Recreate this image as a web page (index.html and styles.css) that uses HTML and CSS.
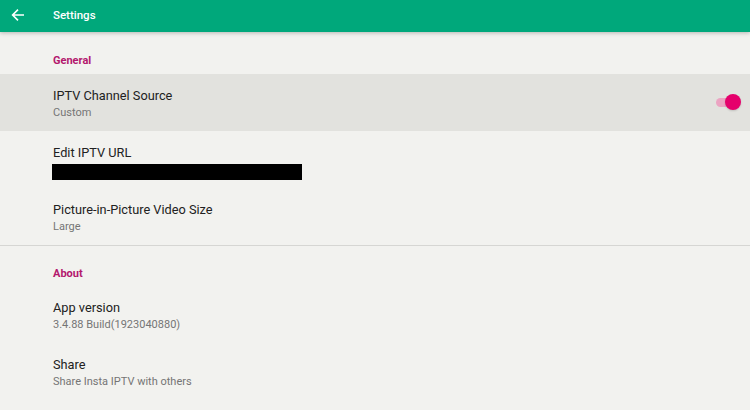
FILE: index.html
```html
<!DOCTYPE html>
<html>
<head>
<meta charset="utf-8">
<link rel="stylesheet" href="styles.css">
</head>
<body>
<div class="app">
  <header class="toolbar">
    <svg class="back" viewBox="0 0 14 14" width="14" height="14"><path d="M13 7H1.8M7 1.6L1.6 7 7 12.4" fill="none" stroke="#fff" stroke-width="1.6"/></svg>
    <span class="title">Settings</span>
  </header>
  <main class="list">
    <div class="category cat-first">General</div>
    <div class="pref selected">
      <div class="texts">
        <div class="pref-title">IPTV Channel Source</div>
        <div class="pref-sub">Custom</div>
      </div>
      <div class="switch"><span class="track"></span><span class="thumb"></span></div>
    </div>
    <div class="pref">
      <div class="texts">
        <div class="pref-title">Edit IPTV URL</div>
        <div class="redact"></div>
      </div>
    </div>
    <div class="pref">
      <div class="texts">
        <div class="pref-title">Picture-in-Picture Video Size</div>
        <div class="pref-sub">Large</div>
      </div>
    </div>
    <div class="divider"></div>
    <div class="category cat-second">About</div>
    <div class="pref">
      <div class="texts">
        <div class="pref-title">App version</div>
        <div class="pref-sub">3.4.88 Build(1923040880)</div>
      </div>
    </div>
    <div class="pref">
      <div class="texts">
        <div class="pref-title">Share</div>
        <div class="pref-sub">Share Insta IPTV with others</div>
      </div>
    </div>
  </main>
</div>
</body>
</html>
```
FILE: styles.css
```css
html, body {
  margin: 0;
  padding: 0;
}
body {
  width: 750px;
  height: 410px;
  overflow: hidden;
  background: #f2f2ef;
  font-family: Roboto, "Noto Sans", sans-serif;
}
.app {
  display: flex;
  flex-direction: column;
  height: 410px;
}
.toolbar {
  height: 32px;
  background: #00a87b;
  display: flex;
  align-items: center;
  box-shadow: 0 1px 4px rgba(0,0,0,0.25);
  position: relative;
  z-index: 1;
  flex-shrink: 0;
}
.back {
  margin-left: 11px;
  margin-top: -3px;
}
.title {
  margin-left: 28px;
  margin-top: -3px;
  color: #fff;
  font-size: 11.5px;
  font-weight: 500;
}
.list {
  display: flex;
  flex-direction: column;
}
.category {
  padding-left: 53px;
  color: #b3186d;
  font-size: 11px;
  font-weight: 700;
  display: flex;
  align-items: flex-end;
  box-sizing: border-box;
}
.cat-first {
  height: 42px;
  padding-bottom: 7px;
}
.cat-second {
  height: 40px;
  padding-bottom: 6px;
}
.pref {
  height: 57px;
  display: flex;
  align-items: flex-start;
  padding-left: 53px;
  box-sizing: border-box;
}
.pref.selected {
  background: #e2e2de;
}
.texts {
  flex: 1;
  padding-top: 14px;
}
.pref-title {
  font-size: 12.75px;
  color: #212121;
  line-height: 16px;
}
.pref-sub {
  font-size: 11px;
  color: #757575;
  line-height: 13px;
  margin-top: 2px;
}
.redact {
  width: 250px;
  height: 16px;
  background: #000;
  margin-top: 3px;
  margin-left: -1px;
}
.switch {
  position: relative;
  width: 28px;
  height: 20px;
  margin-top: 18px;
  margin-right: 9px;
}
.track {
  position: absolute;
  left: 3px;
  top: 6px;
  width: 22px;
  height: 9px;
  border-radius: 5px;
  background: #eba4c2;
}
.thumb {
  position: absolute;
  left: 12px;
  top: 2px;
  width: 16px;
  height: 16px;
  border-radius: 50%;
  background: #e5006c;
  box-shadow: 0 1px 2px rgba(0,0,0,0.15);
}
.divider {
  height: 1px;
  background: #d6d6d3;
}
```
